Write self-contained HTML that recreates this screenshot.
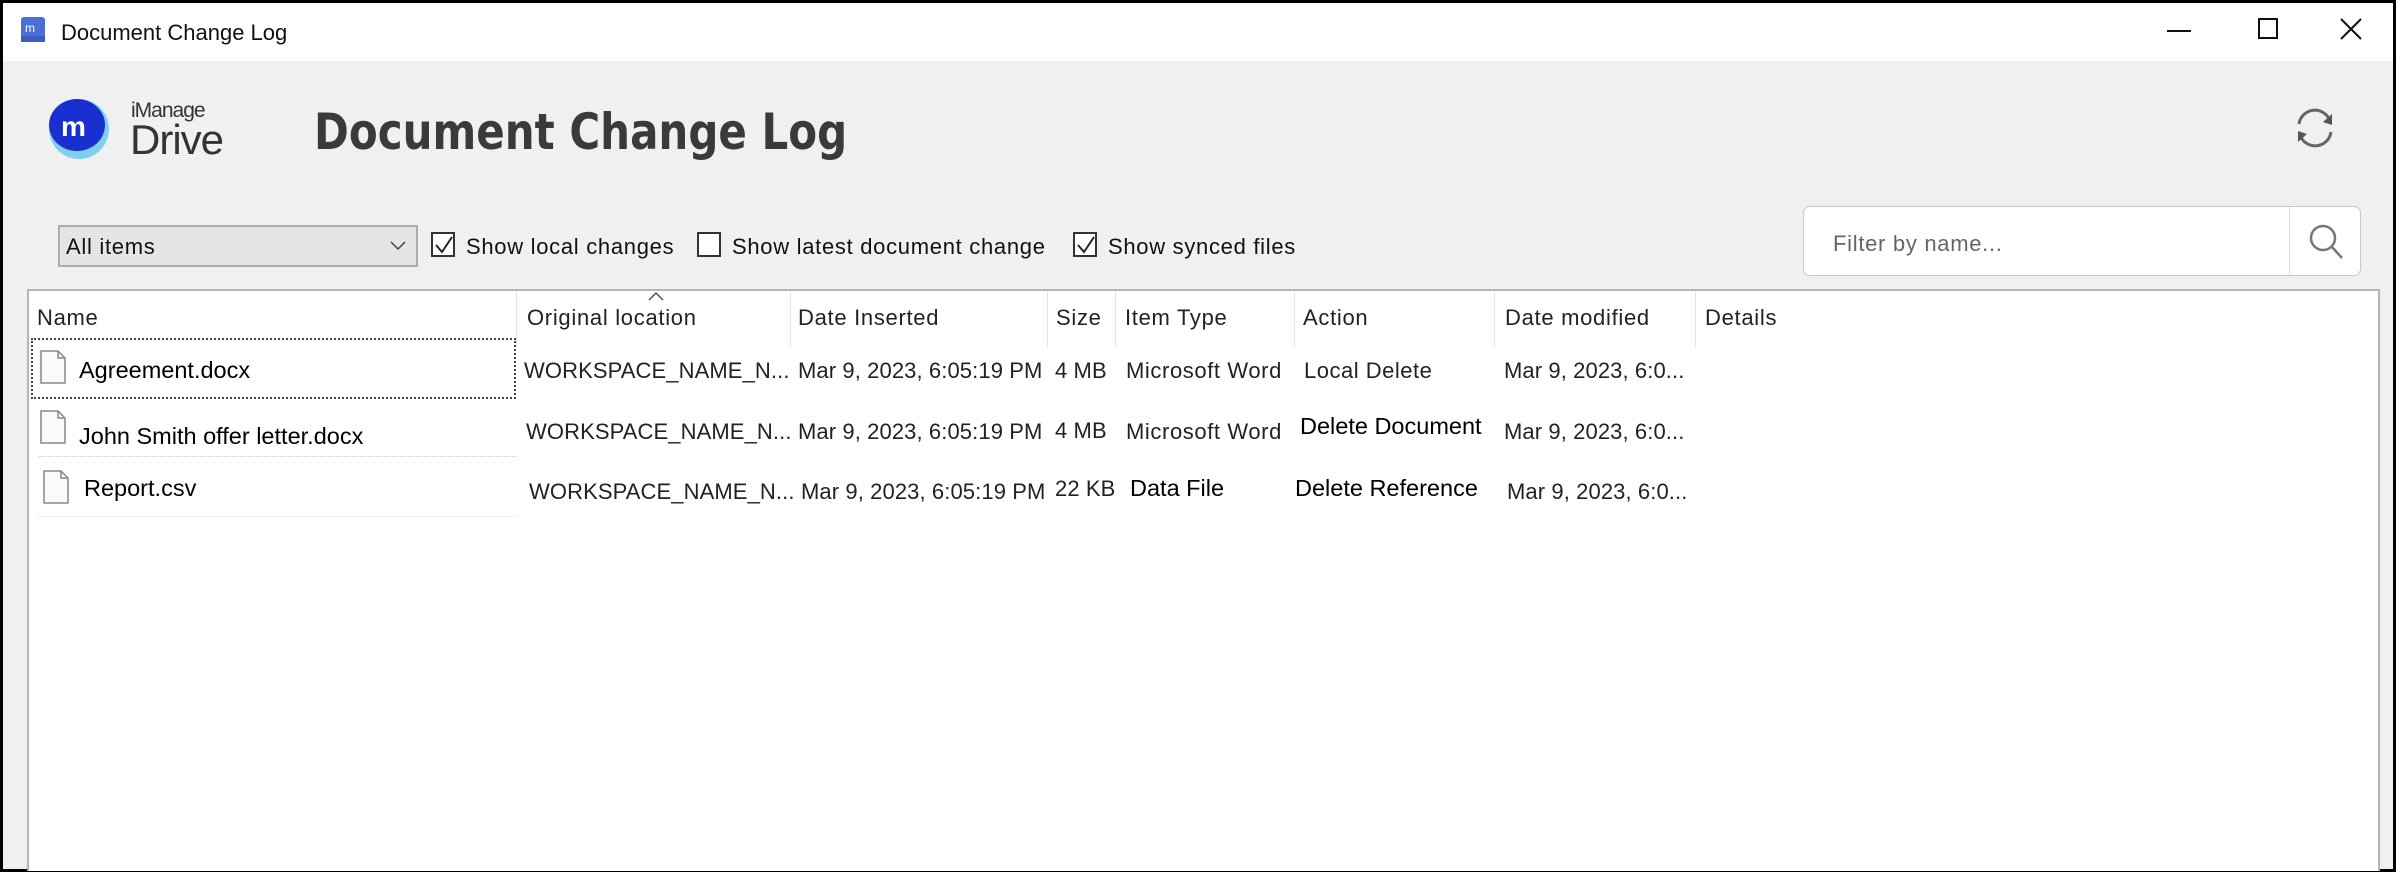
<!DOCTYPE html>
<html><head><meta charset="utf-8"><style>
*{margin:0;padding:0;box-sizing:border-box}
body{width:2396px;height:872px;overflow:hidden;background:#000;font-family:"Liberation Sans",sans-serif;position:relative}
.a{position:absolute;white-space:nowrap}
#win{position:absolute;left:3px;top:3px;width:2390px;height:866px;background:#f0f0f0}
#tb{position:absolute;left:0;top:0;width:2390px;height:58px;background:#fff}
.t{font-size:23.5px;color:#111;line-height:1}
.c{font-size:22px;letter-spacing:0.7px;color:#111;line-height:1}
.h{font-size:22px;letter-spacing:0.7px;color:#222;line-height:1}
.d{font-size:22px;letter-spacing:0.1px;color:#222;line-height:1}
.cb{position:absolute;width:24px;height:25px;border:2px solid #333;background:#fff}
.sep{position:absolute;top:0;width:1px;height:56px;background:#e5e5e5}
.fi{position:absolute;width:26px;height:34px}
</style></head><body>
<div id="win">
 <div id="tb">
  <svg class="a" style="left:17px;top:13px" width="28" height="28" viewBox="0 0 28 28"><rect x="1" y="1" width="24" height="22" rx="3" fill="#4a6fd6"/><rect x="1" y="20" width="24" height="6" fill="#3b5bbf"/><text x="5" y="16" font-size="12" fill="#fff" font-family="Liberation Sans">m</text></svg>
  <div class="a" style="left:58px;top:17px;font-size:22px;color:#111">Document Change Log</div>
  <div class="a" style="left:2164px;top:27px;width:24px;height:2px;background:#111"></div>
  <div class="a" style="left:2255px;top:15px;width:20px;height:21px;border:2px solid #111"></div>
  <svg class="a" style="left:2336px;top:14px" width="24" height="24" viewBox="0 0 24 24"><path d="M2 2L22 22M22 2L2 22" stroke="#111" stroke-width="2"/></svg>
 </div>
 <svg class="a" style="left:40px;top:92px" width="70" height="66" viewBox="0 0 70 66"><ellipse cx="36" cy="34" rx="30" ry="30" fill="#7fd0f0"/><ellipse cx="34" cy="30" rx="28" ry="26" fill="#1a2fd0"/><text x="18" y="41" font-size="28" font-weight="bold" fill="#fff" font-family="Liberation Sans">m</text></svg>
 <div class="a" style="left:128px;top:96px;font-size:21px;color:#333;letter-spacing:-1px">iManage</div>
 <div class="a" style="left:127px;top:113px;font-size:42px;color:#333;letter-spacing:-1px">Drive</div>
 <div class="a" style="left:311px;top:100px;font-size:50px;font-weight:bold;color:#3a3a3a;font-family:'DejaVu Sans',sans-serif;transform:scaleX(0.84);transform-origin:left">Document Change Log</div>
 <svg class="a" style="left:2287px;top:100px" width="50" height="50" viewBox="0 0 50 50"><path d="M9 21A16 16 0 0 1 40 18" fill="none" stroke="#666" stroke-width="3"/><path d="M42 11L42 22L33 19Z" fill="#555"/><path d="M41 29A16 16 0 0 1 10 32" fill="none" stroke="#666" stroke-width="3"/><path d="M8 39L8 28L17 31Z" fill="#555"/></svg>
 <div class="a" style="left:55px;top:222px;width:360px;height:42px;background:#e5e5e5;border:2px solid #adadad"></div>
 <div class="a c" style="left:63px;top:233px">All items</div>
 <svg class="a" style="left:387px;top:238px" width="16" height="10"><path d="M1 1L8 8L15 1" fill="none" stroke="#444" stroke-width="1.5"/></svg>
 <div class="cb" style="left:428px;top:229px"></div><svg class="a" style="left:431px;top:232px" width="20" height="20"><path d="M2 10L8 17L18 2" fill="none" stroke="#222" stroke-width="2"/></svg>
 <div class="a c" style="left:463px;top:233px">Show local changes</div>
 <div class="cb" style="left:694px;top:229px"></div>
 <div class="a c" style="left:729px;top:233px">Show latest document change</div>
 <div class="cb" style="left:1070px;top:229px"></div><svg class="a" style="left:1073px;top:232px" width="20" height="20"><path d="M2 10L8 17L18 2" fill="none" stroke="#222" stroke-width="2"/></svg>
 <div class="a c" style="left:1105px;top:233px">Show synced files</div>
 <div class="a" style="left:1800px;top:203px;width:558px;height:70px;background:#fff;border:1px solid #c8c8c8;border-radius:7px"></div>
 <div class="a" style="left:2286px;top:204px;width:1px;height:68px;background:#ddd"></div>
 <div class="a" style="left:1830px;top:228px;font-size:22px;letter-spacing:0.7px;color:#666">Filter by name...</div>
 <svg class="a" style="left:2303px;top:219px" width="40" height="40" viewBox="0 0 40 40"><circle cx="17" cy="16" r="12" fill="none" stroke="#777" stroke-width="2.5"/><path d="M26 25L36 36" stroke="#777" stroke-width="2.5"/></svg>
 <div class="a" style="left:24px;top:286px;width:2353px;height:582px;background:#fff;border:2px solid #b5b5b5;border-bottom:none"></div>
 <div class="a" style="left:26px;top:288px;width:2350px;height:56px">
  <div class="sep" style="left:487px"></div><div class="sep" style="left:761px"></div><div class="sep" style="left:1018px"></div><div class="sep" style="left:1086px"></div><div class="sep" style="left:1265px"></div><div class="sep" style="left:1465px"></div><div class="sep" style="left:1666px"></div>
 </div>
 <svg class="a" style="left:645px;top:289px" width="16" height="9"><path d="M1 8L8 1L15 8" fill="none" stroke="#555" stroke-width="1.5"/></svg>
 <div class="a h" style="left:34px;top:304px">Name</div>
 <div class="a h" style="left:524px;top:304px">Original location</div>
 <div class="a h" style="left:795px;top:304px">Date Inserted</div>
 <div class="a h" style="left:1053px;top:304px">Size</div>
 <div class="a h" style="left:1122px;top:304px">Item Type</div>
 <div class="a h" style="left:1300px;top:304px">Action</div>
 <div class="a h" style="left:1502px;top:304px">Date modified</div>
 <div class="a h" style="left:1702px;top:304px">Details</div>
 <div class="a" style="left:28px;top:335px;width:485px;height:61px;border:2px dotted #444"></div>
 <div class="a" style="left:36px;top:453px;width:478px;border-top:1px dotted #ccc"></div>
 <div class="a" style="left:36px;top:513px;width:478px;border-top:1px dotted #e0e0e0"></div>
 <svg class="fi" style="left:37px;top:347px" viewBox="0 0 26 34"><path d="M1 1H18L25 8V33H1Z" fill="#fafafa" stroke="#888" stroke-width="1.5"/><path d="M18 1V8H25" fill="none" stroke="#888" stroke-width="1.5"/></svg>
 <svg class="fi" style="left:37px;top:407px" viewBox="0 0 26 34"><path d="M1 1H18L25 8V33H1Z" fill="#fafafa" stroke="#888" stroke-width="1.5"/><path d="M18 1V8H25" fill="none" stroke="#888" stroke-width="1.5"/></svg>
 <svg class="fi" style="left:40px;top:467px" viewBox="0 0 26 34"><path d="M1 1H18L25 8V33H1Z" fill="#fafafa" stroke="#888" stroke-width="1.5"/><path d="M18 1V8H25" fill="none" stroke="#888" stroke-width="1.5"/></svg>
 <div class="a t" style="left:76px;top:356px;color:#000">Agreement.docx</div>
 <div class="a t" style="left:76px;top:422px;color:#000">John Smith offer letter.docx</div>
 <div class="a t" style="left:81px;top:474px;color:#000">Report.csv</div>
 <div class="a d" style="left:521px;top:357px">WORKSPACE_NAME_N...</div>
 <div class="a d" style="left:523px;top:418px">WORKSPACE_NAME_N...</div>
 <div class="a d" style="left:526px;top:478px">WORKSPACE_NAME_N...</div>
 <div class="a d" style="left:795px;top:357px">Mar 9, 2023, 6:05:19 PM</div>
 <div class="a d" style="left:795px;top:418px">Mar 9, 2023, 6:05:19 PM</div>
 <div class="a d" style="left:798px;top:478px">Mar 9, 2023, 6:05:19 PM</div>
 <div class="a d" style="left:1052px;top:357px">4 MB</div>
 <div class="a d" style="left:1052px;top:417px">4 MB</div>
 <div class="a d" style="left:1052px;top:475px">22 KB</div>
 <div class="a d" style="left:1123px;top:357px;letter-spacing:0.6px">Microsoft Word</div>
 <div class="a d" style="left:1123px;top:418px;letter-spacing:0.6px">Microsoft Word</div>
 <div class="a t" style="left:1127px;top:474px;color:#000">Data File</div>
 <div class="a d" style="left:1301px;top:357px;letter-spacing:0.5px">Local Delete</div>
 <div class="a t" style="left:1297px;top:412px;color:#000">Delete Document</div>
 <div class="a t" style="left:1292px;top:474px;color:#000">Delete Reference</div>
 <div class="a d" style="left:1501px;top:357px">Mar 9, 2023, 6:0...</div>
 <div class="a d" style="left:1501px;top:418px">Mar 9, 2023, 6:0...</div>
 <div class="a d" style="left:1504px;top:478px">Mar 9, 2023, 6:0...</div>
</div>
</body></html>
